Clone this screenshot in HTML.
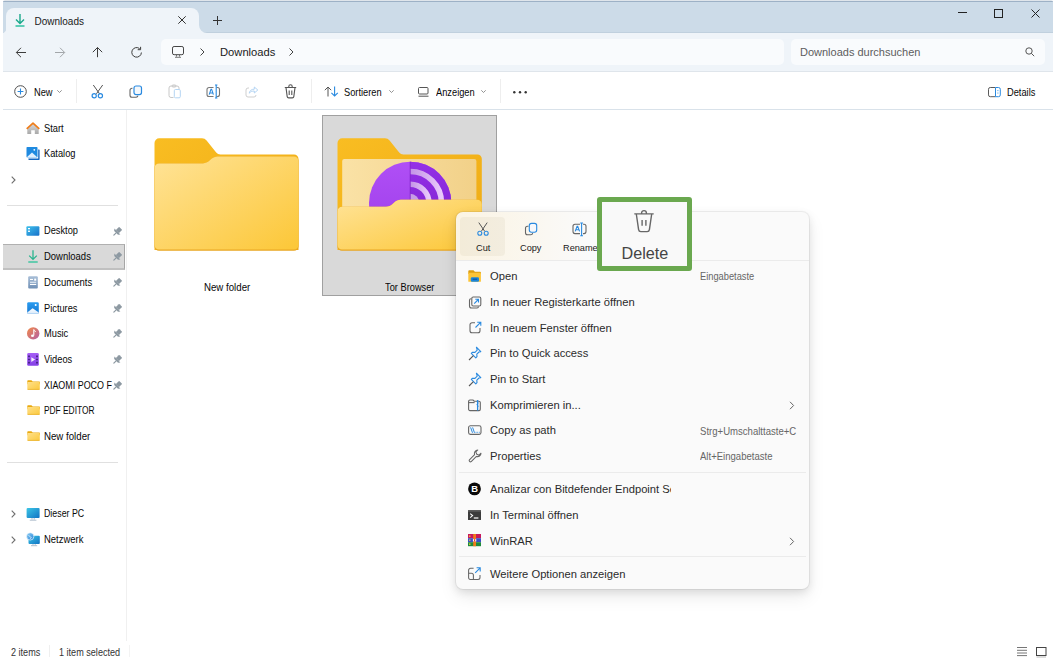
<!DOCTYPE html>
<html><head><meta charset="utf-8">
<style>
*{margin:0;padding:0;box-sizing:border-box}
html,body{width:1056px;height:661px;overflow:hidden;background:#fff;font-family:"Liberation Sans",sans-serif;color:#080808}
.a{position:absolute}
.t{position:absolute;white-space:nowrap;line-height:16px;height:16px}
svg{position:absolute;overflow:visible}
#topline{left:3px;top:0;width:1050px;height:2px;border-radius:4px 4px 0 0;background:linear-gradient(#dfe5eb 0,#dfe5eb 40%,#9db1c6 40%)}
#title{left:3px;top:2px;width:1050px;height:31px;background:#ccdbe8;border-bottom:1px solid #c0d0de}
#tab{left:6px;top:8px;width:193px;height:26px;background:#eff4f9;border-radius:8px 8px 0 0}
#nav{left:3px;top:33px;width:1050px;height:38px;background:#eff4f9}
#navline{left:3px;top:71px;width:1050px;height:1px;background:#dfe5eb}
#addr{left:161px;top:39px;width:623px;height:26px;background:#f9fbfd;border-radius:5px}
#search{left:791px;top:39px;width:254px;height:26px;background:#f9fbfd;border-radius:5px}
#tbline{left:3px;top:109px;width:1050px;height:1px;background:#d9e2ea}
#sidediv{left:126px;top:110px;width:1px;height:531px;background:#f0f0f0}
.side{font-size:9.5px;color:#1a1a1a}
.sel{background:#d9d9d9;border:1px solid #a6a6a6}
.menu{left:456px;top:212px;width:353px;height:377px;background:#fafafa;border-radius:7px;box-shadow:0 0 0 1px rgba(0,0,0,.055),0 3px 8px rgba(0,0,0,.1),0 8px 18px rgba(0,0,0,.08)}
.mi{font-size:11.1px;color:#1a1a1a}
.sc{font-size:9.3px;color:#5f5f5f}
</style></head><body>
<div class="a" id="topline"></div>
<div class="a" id="title"></div>
<div class="a" id="tab"></div>
<div class="a" id="nav"></div>
<svg style="left:199px;top:25px" width="8" height="8" viewBox="0 0 8 8"><path d="M0 0v8h8A8 8 0 0 1 0 0z" fill="#eff4f9"/></svg>
<svg style="left:3px;top:27px" width="3" height="6" viewBox="0 0 3 6"><path d="M3 0v6H0A5 5 0 0 0 3 0z" fill="#eff4f9"/></svg>
<div class="a" id="navline"></div>
<div class="a" id="addr"></div>
<div class="a" id="search"></div>
<div class="a" id="tbline"></div>
<div class="a" id="sidediv"></div>

<!-- tab content -->
<svg style="left:13.5px;top:13px" width="12" height="14" viewBox="0 0 12 14"><path d="M6 1v9M2 6.5l4 4 4-4" stroke="#1aa88b" stroke-width="1.4" fill="none"/><path d="M1.5 13h9" stroke="#2ec1a0" stroke-width="1.5"/></svg>
<div class="t" style="left:34.5px;top:13.5px;font-size:10px;color:#1a1a1a">Downloads</div>
<svg style="left:178px;top:16px" width="8" height="8" viewBox="0 0 8 8"><path d="M.3 .3l7.4 7.4M7.7 .3L.3 7.7" stroke="#333" stroke-width="1"/></svg>
<svg style="left:213px;top:16px" width="9" height="9" viewBox="0 0 9 9"><path d="M4.5 0v9M0 4.5h9" stroke="#333" stroke-width="1"/></svg>

<!-- window controls -->
<svg style="left:958px;top:12px" width="9" height="2"><path d="M0 .5h9" stroke="#222" stroke-width="1"/></svg>
<svg style="left:994px;top:9px" width="9" height="9"><rect x=".5" y=".5" width="8" height="8" fill="none" stroke="#222" stroke-width="1"/></svg>
<svg style="left:1031px;top:9px" width="9" height="9"><path d="M.5 .5l8 8M8.5 .5l-8 8" stroke="#222" stroke-width="1"/></svg>

<!-- nav -->
<svg style="left:15px;top:46px" width="12" height="12" viewBox="0 0 12 12"><path d="M11 6.5H1.5M6 1.8L1.3 6.5 6 11.2" stroke="#3c3c3c" stroke-width="1" fill="none"/></svg>
<svg style="left:54px;top:46px" width="12" height="12" viewBox="0 0 12 12"><path d="M1 6.5h9.5M6 1.8l4.7 4.7L6 11.2" stroke="#a2a6aa" stroke-width="1" fill="none"/></svg>
<svg style="left:92px;top:46px" width="12" height="12" viewBox="0 0 12 12"><path d="M5.5 11.2V1.5M.8 6.2L5.5 1.5l4.7 4.7" stroke="#3c3c3c" stroke-width="1" fill="none"/></svg>
<svg style="left:131px;top:46px" width="12" height="12" viewBox="0 0 12 12"><path d="M10.4 6.5A4.8 4.8 0 1 1 8.6 2.6M9.6.8v2.9H6.7" stroke="#3c3c3c" stroke-width="1" fill="none"/></svg>
<svg style="left:172px;top:46px" width="12" height="12" viewBox="0 0 12 12"><rect x=".5" y=".5" width="11" height="8.2" rx="1.6" fill="none" stroke="#454545"/><path d="M4.5 9v1.6M7.5 9v1.6M3 11.3h6" stroke="#555" stroke-width=".8"/></svg>
<svg style="left:200px;top:48px" width="5" height="8"><path d="M.5 .5L4 4 .5 7.5" stroke="#444" fill="none"/></svg>
<div class="t" style="left:220px;top:44px;font-size:11.2px;color:#1a1a1a">Downloads</div>
<svg style="left:289px;top:48px" width="5" height="8"><path d="M.5 .5L4 4 .5 7.5" stroke="#444" fill="none"/></svg>
<div class="t" style="left:800px;top:44px;font-size:11px;color:#5d5d5d">Downloads durchsuchen</div>
<svg style="left:1025px;top:47px" width="10" height="10"><circle cx="4" cy="4" r="3.2" fill="none" stroke="#555"/><path d="M6.3 6.3L9.2 9.2" stroke="#555"/></svg>

<!-- toolbar -->
<svg style="left:13.5px;top:85px" width="13" height="13" viewBox="0 0 13 13"><circle cx="6.5" cy="6.5" r="5.8" fill="none" stroke="#505050" stroke-width="1"/><path d="M6.5 3.6v5.8M3.6 6.5h5.8" stroke="#2a8ae0" stroke-width="1.1"/></svg>
<div class="t" style="left:33.8px;top:84.76px;font-size:10.2px;transform:scaleX(.91);transform-origin:0 0">New</div>
<svg style="left:57px;top:90px" width="5" height="3"><path d="M.3 .3L2.5 2.5 4.7 .3" stroke="#777" stroke-width=".8" fill="none"/></svg>
<div class="a" style="left:76px;top:79px;width:1px;height:24px;background:#eeeeee"></div>


<!-- toolbar icons -->
<svg style="left:91px;top:84px" width="14" height="15" viewBox="0 0 14 15"><path d="M2.3 1L8.6 9.8M11.7 1L5.4 9.8" stroke="#555" stroke-width="1" fill="none"/><circle cx="3.2" cy="11.7" r="2.1" fill="none" stroke="#2a8ae0" stroke-width="1.2"/><circle cx="9.4" cy="11.7" r="2.1" fill="none" stroke="#2a8ae0" stroke-width="1.2"/></svg>
<svg style="left:129px;top:85px" width="14" height="14" viewBox="0 0 14 14"><path d="M3.5 3.2H3A2 2 0 0 0 1 5.2v5A2 2 0 0 0 3 12.2h4A2 2 0 0 0 9 10.6" stroke="#666" stroke-width="1.1" fill="none"/><rect x="5" y="1" width="7.5" height="8.6" rx="2" fill="#f4f8fc" stroke="#2a8ae0" stroke-width="1.2"/></svg>
<svg style="left:168px;top:84px" width="14" height="15" viewBox="0 0 14 15"><path d="M5.5 13.5H3a2 2 0 0 1-2-2V4a2 2 0 0 1 2-2h6a2 2 0 0 1 2 2v1" stroke="#c8c8c8" fill="none"/><rect x="4" y="1" width="4" height="2" rx="1" fill="none" stroke="#c8c8c8"/><rect x="6.3" y="5.5" width="6" height="8.3" rx="1.2" fill="none" stroke="#b3d4f3"/></svg>
<svg style="left:206px;top:84px" width="15" height="15" viewBox="0 0 15 15"><path d="M7.5 3.5H3a2 2 0 0 0-2 2v5a2 2 0 0 0 2 2h4.5M10.5 3.5H11.5a2 2 0 0 1 2 2v5a2 2 0 0 1-2 2H10.5" stroke="#777" stroke-width="1.1" fill="none"/><path d="M3.2 10.6L5 5.2h.6l1.8 5.4M3.8 9h3" stroke="#2a8ae0" stroke-width="1.1" fill="none"/><path d="M9 1h2.4M10.2 1v13M9 14h2.4" stroke="#2a8ae0" stroke-width="1.1" fill="none"/></svg>
<svg style="left:245px;top:85px" width="14" height="13" viewBox="0 0 14 13"><path d="M4 3H3a2 2 0 0 0-2 2v5a2 2 0 0 0 2 2h6a2 2 0 0 0 2-2" stroke="#cfcfcf" fill="none"/><path d="M4.2 8.2C4.6 5.6 6.6 4.2 9.3 4.2V2l3.5 3-3.5 3V6c-2 0-3.8.6-5.1 2.2z" fill="none" stroke="#b3d4f3" stroke-width="1"/></svg>
<svg style="left:284px;top:84px" width="13" height="15" viewBox="0 0 13 15"><path d="M.8 3.5h11.4M4.8 3.3V2.4a1.6 1.6 0 0 1 3.4 0v.9M2 3.6l1.2 9a1.5 1.5 0 0 0 1.5 1.3h3.6a1.5 1.5 0 0 0 1.5-1.3l1.2-9M5.2 6.5v4.5M7.8 6.5v4.5" stroke="#555" stroke-width="1.1" fill="none"/></svg>
<div class="a" style="left:311px;top:79px;width:1px;height:24px;background:#eeeeee"></div>
<svg style="left:324px;top:86px" width="15" height="11" viewBox="0 0 15 11"><path d="M4 10.5V1M.8 4.2L4 1l3.2 3.2" stroke="#555" stroke-width="1" fill="none"/><path d="M10.6 .5V10M7.4 6.8l3.2 3.2 3.2-3.2" stroke="#2a8ae0" stroke-width="1.1" fill="none"/></svg>
<div class="t" style="left:344px;top:84.76px;font-size:10.2px;transform:scaleX(.91);transform-origin:0 0">Sortieren</div>
<svg style="left:389px;top:90px" width="5" height="3"><path d="M.3 .3L2.5 2.5 4.7 .3" stroke="#777" stroke-width=".8" fill="none"/></svg>
<svg style="left:418px;top:87px" width="11" height="10" viewBox="0 0 11 10"><rect x=".5" y=".5" width="9.5" height="6.5" rx="1" fill="none" stroke="#555"/><path d="M.5 9.2h10" stroke="#555"/></svg>
<div class="t" style="left:436px;top:84.76px;font-size:10.2px;transform:scaleX(.91);transform-origin:0 0">Anzeigen</div>
<svg style="left:481px;top:90px" width="5" height="3"><path d="M.3 .3L2.5 2.5 4.7 .3" stroke="#777" stroke-width=".8" fill="none"/></svg>
<div class="a" style="left:500px;top:79px;width:1px;height:24px;background:#eeeeee"></div>
<svg style="left:513px;top:91px" width="14" height="3"><circle cx="1.3" cy="1.3" r="1.2" fill="#333"/><circle cx="7" cy="1.3" r="1.2" fill="#333"/><circle cx="12.7" cy="1.3" r="1.2" fill="#333"/></svg>
<svg style="left:988px;top:87px" width="14" height="11" viewBox="0 0 14 11"><path d="M7.5 .5H2.3A1.8 1.8 0 0 0 .5 2.3v5.6a1.8 1.8 0 0 0 1.8 1.8h5.2" fill="none" stroke="#5a5a5a"/><path d="M7.5 .5h3A1.8 1.8 0 0 1 12.3 2.3v5.6a1.8 1.8 0 0 1-1.8 1.8h-3z" fill="#fff" stroke="#2a8ae0"/><path d="M9.9 3.2v.9M9.9 5.6v.9" stroke="#2a8ae0" stroke-width="1"/></svg>
<div class="t" style="left:1007px;top:84.76px;font-size:10.2px;transform:scaleX(.91);transform-origin:0 0">Details</div>
<!-- sidebar -->
<div class="a" style="left:3px;top:244px;width:122px;height:26px;background:#d9d9d9;border-top:1px solid #b0b0b0;border-bottom:2px solid #c0c0c0;border-right:1px solid #a6a6a6"></div>
<div class="a" style="left:7px;top:205px;width:111px;height:1px;background:#e0e0e0"></div>
<div class="a" style="left:7px;top:462px;width:111px;height:1px;background:#e0e0e0"></div>
<div class="t" style="left:43.5px;top:120.67px;font-size:10.2px;transform:scaleX(.91);transform-origin:0 0">Start</div>
<div class="t" style="left:43.5px;top:146.37px;font-size:10.2px;transform:scaleX(.91);transform-origin:0 0">Katalog</div>
<div class="t" style="left:43.5px;top:223.47px;font-size:10.2px;transform:scaleX(.91);transform-origin:0 0">Desktop</div>
<div class="t" style="left:43.5px;top:249.17px;font-size:10.2px;transform:scaleX(.93);transform-origin:0 0">Downloads</div>
<div class="t" style="left:43.5px;top:274.87px;font-size:10.2px;transform:scaleX(.935);transform-origin:0 0">Documents</div>
<div class="t" style="left:43.5px;top:300.57px;font-size:10.2px;transform:scaleX(.91);transform-origin:0 0">Pictures</div>
<div class="t" style="left:43.5px;top:326.27px;font-size:10.2px;transform:scaleX(.91);transform-origin:0 0">Music</div>
<div class="t" style="left:43.5px;top:351.97px;font-size:10.2px;transform:scaleX(.91);transform-origin:0 0">Videos</div>
<div class="t" style="left:43.5px;top:377.67px;font-size:10.2px;transform:scaleX(.875);transform-origin:0 0;width:78px;overflow:hidden">XIAOMI POCO F</div>
<div class="t" style="left:43.5px;top:403.37px;font-size:10.2px;transform:scaleX(0.82);transform-origin:0 0">PDF EDITOR</div>
<div class="t" style="left:43.5px;top:429.07px;font-size:10.2px;transform:scaleX(.95);transform-origin:0 0">New folder</div>
<div class="t" style="left:43.5px;top:506.17px;font-size:10.2px;transform:scaleX(0.865);transform-origin:0 0">Dieser PC</div>
<div class="t" style="left:43.5px;top:531.87px;font-size:10.2px;transform:scaleX(.93);transform-origin:0 0">Netzwerk</div>
<svg style="left:111px;top:225.5px" width="12" height="12" viewBox="0 0 12 12"><g transform="rotate(45 6 6)" fill="#8d99a2"><rect x="3.8" y=".8" width="4.4" height="4.8" rx=".6"/><path d="M1.8 5.4h8.4l-1.5 1.9H3.3z"/><rect x="5.4" y="7" width="1.2" height="4" rx=".5"/></g></svg>
<svg style="left:111px;top:251.2px" width="12" height="12" viewBox="0 0 12 12"><g transform="rotate(45 6 6)" fill="#8d99a2"><rect x="3.8" y=".8" width="4.4" height="4.8" rx=".6"/><path d="M1.8 5.4h8.4l-1.5 1.9H3.3z"/><rect x="5.4" y="7" width="1.2" height="4" rx=".5"/></g></svg>
<svg style="left:111px;top:276.9px" width="12" height="12" viewBox="0 0 12 12"><g transform="rotate(45 6 6)" fill="#8d99a2"><rect x="3.8" y=".8" width="4.4" height="4.8" rx=".6"/><path d="M1.8 5.4h8.4l-1.5 1.9H3.3z"/><rect x="5.4" y="7" width="1.2" height="4" rx=".5"/></g></svg>
<svg style="left:111px;top:302.6px" width="12" height="12" viewBox="0 0 12 12"><g transform="rotate(45 6 6)" fill="#8d99a2"><rect x="3.8" y=".8" width="4.4" height="4.8" rx=".6"/><path d="M1.8 5.4h8.4l-1.5 1.9H3.3z"/><rect x="5.4" y="7" width="1.2" height="4" rx=".5"/></g></svg>
<svg style="left:111px;top:328.3px" width="12" height="12" viewBox="0 0 12 12"><g transform="rotate(45 6 6)" fill="#8d99a2"><rect x="3.8" y=".8" width="4.4" height="4.8" rx=".6"/><path d="M1.8 5.4h8.4l-1.5 1.9H3.3z"/><rect x="5.4" y="7" width="1.2" height="4" rx=".5"/></g></svg>
<svg style="left:111px;top:354.0px" width="12" height="12" viewBox="0 0 12 12"><g transform="rotate(45 6 6)" fill="#8d99a2"><rect x="3.8" y=".8" width="4.4" height="4.8" rx=".6"/><path d="M1.8 5.4h8.4l-1.5 1.9H3.3z"/><rect x="5.4" y="7" width="1.2" height="4" rx=".5"/></g></svg>
<svg style="left:111px;top:379.7px" width="12" height="12" viewBox="0 0 12 12"><g transform="rotate(45 6 6)" fill="#8d99a2"><rect x="3.8" y=".8" width="4.4" height="4.8" rx=".6"/><path d="M1.8 5.4h8.4l-1.5 1.9H3.3z"/><rect x="5.4" y="7" width="1.2" height="4" rx=".5"/></g></svg>
<svg style="left:10.5px;top:176.2px" width="6" height="8"><path d="M.7 .7L4 4 .7 7.3" stroke="#6e6e6e" stroke-width="1.1" fill="none"/></svg>
<svg style="left:10.5px;top:510.3px" width="6" height="8"><path d="M.7 .7L4 4 .7 7.3" stroke="#6e6e6e" stroke-width="1.1" fill="none"/></svg>
<svg style="left:10.5px;top:536.0px" width="6" height="8"><path d="M.7 .7L4 4 .7 7.3" stroke="#6e6e6e" stroke-width="1.1" fill="none"/></svg>

<!-- sidebar icons -->
<svg style="left:26px;top:122px" width="14" height="12" viewBox="0 0 14 12"><defs><linearGradient id="hg" x1="0" y1="0" x2="0" y2="1"><stop offset="0" stop-color="#d9d9d9"/><stop offset="1" stop-color="#a9a9a9"/></linearGradient></defs><path d="M1.3 6.2L7 1.5l5.7 4.7V12H8.8V8.2H5.2V12H1.3z" fill="url(#hg)"/><path d="M.7 6.8L7 1.2l6.3 5.6" stroke="#ef7d1a" stroke-width="1.7" fill="none" stroke-linejoin="round"/></svg>
<svg style="left:26px;top:147px" width="14" height="13" viewBox="0 0 14 13"><path d="M12.2 2.5h.8a.6.6 0 0 1 .6.6v9.2a.6.6 0 0 1-.6.6H3a.6.6 0 0 1-.6-.6v-.8h9.8z" fill="#1467c2"/><rect x=".5" y="0" width="11" height="10.5" rx=".8" fill="#1f8ae0"/><path d="M.5 10.5L6 5.6l5.5 4.9z" fill="#e0efff"/><circle cx="8.3" cy="2.8" r=".9" fill="#fff"/></svg>
<svg style="left:26px;top:226px" width="14" height="10" viewBox="0 0 14 10"><defs><linearGradient id="dg" x1="0" y1="0" x2="1" y2="1"><stop offset="0" stop-color="#3fc1ec"/><stop offset="1" stop-color="#1670c9"/></linearGradient></defs><rect x=".4" y=".2" width="13" height="9.6" rx="1" fill="url(#dg)"/><rect x="2" y="2" width="2" height="1.3" fill="#fff"/><rect x="2" y="4.6" width="2" height="1.3" fill="#fff"/></svg>
<svg style="left:28px;top:250px" width="10" height="13" viewBox="0 0 10 13"><path d="M5 .3v9M1.2 5.6L5 9.4l3.8-3.8" stroke="#28b48e" stroke-width="1.3" fill="none"/><path d="M.3 12h9.4" stroke="#33c49c" stroke-width="1.4"/></svg>
<svg style="left:28px;top:276px" width="10" height="13" viewBox="0 0 10 13"><defs><linearGradient id="docg" x1="0" y1="0" x2="0" y2="1"><stop offset="0" stop-color="#a9bfd8"/><stop offset="1" stop-color="#6f8fb5"/></linearGradient></defs><rect x=".2" y=".2" width="9.6" height="12.4" rx="1" fill="url(#docg)"/><rect x="2" y="2.9" width="3" height="1.1" fill="#fff"/><rect x="6.2" y="2.6" width="2" height="2.1" fill="#fff"/><rect x="2" y="5.7" width="6.2" height="1.1" fill="#e6eef7"/><rect x="2" y="7.9" width="6.2" height="1.1" fill="#fff"/></svg>
<svg style="left:27px;top:302px" width="12" height="12" viewBox="0 0 12 12"><defs><linearGradient id="pg" x1="0" y1="0" x2="0" y2="1"><stop offset="0" stop-color="#2a9cf0"/><stop offset="1" stop-color="#1677d2"/></linearGradient><linearGradient id="pm" x1="0" y1="0" x2="0" y2="1"><stop offset="0" stop-color="#ffffff"/><stop offset="1" stop-color="#d6e9fb"/></linearGradient></defs><rect x=".2" y=".2" width="11.6" height="11.6" rx="1.4" fill="url(#pg)"/><path d="M.2 10.4L5.6 6.2l6.2 4.2v.2a1.2 1.2 0 0 1-1.2 1.2H1.4A1.2 1.2 0 0 1 .2 10.6z" fill="url(#pm)"/><circle cx="8.7" cy="3" r="1" fill="#fff"/></svg>
<svg style="left:27px;top:327px" width="13" height="13" viewBox="0 0 13 13"><defs><linearGradient id="mg" x1="0" y1="0" x2="1" y2="1"><stop offset="0" stop-color="#f28a48"/><stop offset="1" stop-color="#b35fa6"/></linearGradient></defs><circle cx="6.2" cy="6.4" r="6.2" fill="url(#mg)"/><path d="M6.8 2.6v6" stroke="#fff" stroke-width="1.1"/><path d="M6.8 2.6c.4 1 1.6 1.4 1.9 2.4" stroke="#fff" stroke-width=".9" fill="none"/><ellipse cx="5.5" cy="8.7" rx="1.5" ry="1.2" fill="#fff"/></svg>
<svg style="left:27px;top:353px" width="12" height="13" viewBox="0 0 12 13"><defs><linearGradient id="vg" x1="0" y1="0" x2="0" y2="1"><stop offset="0" stop-color="#a65ff6"/><stop offset="1" stop-color="#8440e6"/></linearGradient></defs><rect x=".2" y=".1" width="11.6" height="12.6" rx="1.3" fill="url(#vg)"/><path d="M2 2.6v1.6M2 5.7v1.6M2 8.8v1.6M10 2.6v1.6M10 5.7v1.6M10 8.8v1.6" stroke="#3f1f7a" stroke-width="1.7"/><path d="M4.3 4.3v4.6l3.8-2.3z" fill="#f2eefc"/></svg>
<svg width="0" height="0" style="left:0;top:0"><defs><linearGradient id="fg" x1="0" y1="0" x2="1" y2="1"><stop offset="0" stop-color="#ffe08a"/><stop offset="1" stop-color="#fbc93e"/></linearGradient></defs></svg>
<svg style="left:27px;top:380px" width="13" height="10" viewBox="0 0 13 10"><path d="M.3 1A.8.8 0 0 1 1.1.2h3.3l1.3 1.2h6.5a.8.8 0 0 1 .8.8v2H.3z" fill="#e9a90f"/><rect x=".3" y="2" width="12.5" height="7.8" rx=".7" fill="url(#fg)"/><path d="M.6 9.4h11.9" stroke="#eab12a" stroke-width=".8"/></svg>
<svg style="left:27px;top:405px" width="13" height="10" viewBox="0 0 13 10"><path d="M.3 1A.8.8 0 0 1 1.1.2h3.3l1.3 1.2h6.5a.8.8 0 0 1 .8.8v2H.3z" fill="#e9a90f"/><rect x=".3" y="2" width="12.5" height="7.8" rx=".7" fill="url(#fg)"/><path d="M.6 9.4h11.9" stroke="#eab12a" stroke-width=".8"/></svg>
<svg style="left:27px;top:431px" width="13" height="10" viewBox="0 0 13 10"><path d="M.3 1A.8.8 0 0 1 1.1.2h3.3l1.3 1.2h6.5a.8.8 0 0 1 .8.8v2H.3z" fill="#e9a90f"/><rect x=".3" y="2" width="12.5" height="7.8" rx=".7" fill="url(#fg)"/><path d="M.6 9.4h11.9" stroke="#eab12a" stroke-width=".8"/></svg>

<svg style="left:26px;top:508px" width="14" height="13" viewBox="0 0 14 13"><defs><linearGradient id="pcg" x1="0" y1="0" x2="1" y2="1"><stop offset="0" stop-color="#3cc6e6"/><stop offset="1" stop-color="#1273c4"/></linearGradient></defs><rect x=".6" y=".1" width="13" height="9.9" rx="1" fill="url(#pcg)"/><path d="M6 10v1.6M8.2 10v1.6M3.8 12.2h6.6" stroke="#a8b8c8" stroke-width=".9"/></svg>
<svg style="left:26px;top:532px" width="14" height="14" viewBox="0 0 14 14"><defs><linearGradient id="ng" x1="0" y1="0" x2="1" y2="1"><stop offset="0" stop-color="#8ccdf4"/><stop offset="1" stop-color="#2a86d8"/></linearGradient></defs><rect x="2.5" y="3.8" width="11.3" height="8.2" rx="1" fill="url(#pcg)"/><path d="M7 12v1.4M9.2 12v1.4M5 13.7h6.2" stroke="#a8b8c8" stroke-width=".9"/><circle cx="4.2" cy="4.4" r="3.7" fill="url(#ng)" stroke="#fff" stroke-width=".6"/><path d="M2.5 3.5c1 .3 1.3 1.2 2.2 1.5M4 6.8c.5-.6 1.2-.8 1.5-1.6" stroke="#e8f6ff" stroke-width=".8" fill="none"/></svg>

<!-- files -->
<div class="a sel" style="left:322px;top:115px;width:175px;height:181px;border-color:#a0a0a0"></div>
<svg style="left:140px;top:130px" width="360" height="130" viewBox="140 130 360 130">
<defs>
<linearGradient id="ffront" x1="0" y1="0" x2="1" y2="1"><stop offset="0" stop-color="#ffe397"/><stop offset="1" stop-color="#fcc737"/></linearGradient>
<linearGradient id="fback" x1="0" y1="0" x2="1" y2="1"><stop offset="0" stop-color="#f9bd22"/><stop offset="1" stop-color="#eeaa14"/></linearGradient>
<linearGradient id="paper" x1="0" y1="0" x2="1" y2="0"><stop offset="0" stop-color="#fae2a6"/><stop offset="1" stop-color="#f2d189"/></linearGradient>
<linearGradient id="torl" x1="0" y1="0" x2="0" y2="1"><stop offset="0" stop-color="#b04ff6"/><stop offset="1" stop-color="#9c3de8"/></linearGradient>
<linearGradient id="torr" x1="0" y1="0" x2="0" y2="1"><stop offset="0" stop-color="#9430e6"/><stop offset="1" stop-color="#7a1fcc"/></linearGradient><linearGradient id="ring" x1="0" y1="0" x2="1" y2="0"><stop offset="0" stop-color="#c393e6"/><stop offset="1" stop-color="#e9c9fb"/></linearGradient><clipPath id="torclip"><rect x="340" y="150" width="145" height="60"/></clipPath>
</defs>
<!-- New folder -->
<path d="M154.5 250V143a4.7 4.7 0 0 1 4.7-4.7H202a6 6 0 0 1 4.6 2.2l9.6 12a5.4 5.4 0 0 0 4.2 2H294a4.5 4.5 0 0 1 4.5 4.5V250z" fill="url(#fback)"/>
<path d="M154.5 168a4.6 4.6 0 0 1 4.6-4.6H203c2.6 0 4.6-1 6.6-2.8l1.6-1.5c2-1.8 4-2.7 6.6-2.7H294a4.5 4.5 0 0 1 4.5 4.5V246.3a4.5 4.5 0 0 1-4.5 4.5H159a4.5 4.5 0 0 1-4.5-4.5z" fill="#e9a622"/>
<path d="M154.5 168a4.6 4.6 0 0 1 4.6-4.6H203c2.6 0 4.6-1 6.6-2.8l1.6-1.5c2-1.8 4-2.7 6.6-2.7H294a4.5 4.5 0 0 1 4.5 4.5V245a4.5 4.5 0 0 1-4.5 4.5H159a4.5 4.5 0 0 1-4.5-4.5z" fill="url(#ffront)"/>
<!-- Tor folder -->
<path d="M337.5 250V143a4.7 4.7 0 0 1 4.7-4.7H385a6 6 0 0 1 4.6 2.2l9.6 12a5.4 5.4 0 0 0 4.2 2H477.5a4.3 4.3 0 0 1 4.3 4.3V250z" fill="url(#fback)"/>
<rect x="342.2" y="158.9" width="134.2" height="70" rx="2.2" fill="url(#paper)"/>
<g clip-path="url(#torclip)">
<circle cx="410.2" cy="202.9" r="41.2" fill="url(#torl)"/>
<path d="M410.2 161.7a41.2 41.2 0 0 1 0 82.4z" fill="url(#torr)"/>
<path d="M410.2 171.6a31.3 31.3 0 0 1 0 62.6" stroke="url(#ring)" stroke-width="5.5" fill="none"/>
<path d="M410.2 184.2a18.7 18.7 0 0 1 0 37.4" stroke="url(#ring)" stroke-width="5.5" fill="none"/>
<path d="M410.2 193.7a9.2 9.2 0 0 1 0 18.4z" fill="#c79be6"/>
<path d="M410.2 161.7v82" stroke="#7d22c8" stroke-width=".8"/>
</g>
<path d="M337.5 211.3a4.6 4.6 0 0 1 4.6-4.6H386c2.6 0 4.6-1 6.6-2.8l1.6-1.5c2-1.8 4-2.7 6.6-2.7H477.3a4.5 4.5 0 0 1 4.5 4.5V246.3a4.5 4.5 0 0 1-4.5 4.5H342a4.5 4.5 0 0 1-4.5-4.5z" fill="#e9a622"/>
<path d="M337.5 211.3a4.6 4.6 0 0 1 4.6-4.6H386c2.6 0 4.6-1 6.6-2.8l1.6-1.5c2-1.8 4-2.7 6.6-2.7H477.3a4.5 4.5 0 0 1 4.5 4.5V245a4.5 4.5 0 0 1-4.5 4.5H342a4.5 4.5 0 0 1-4.5-4.5z" fill="url(#ffront)"/>
</svg>
<div class="t" style="left:204px;top:280.47px;font-size:10.2px;transform:scaleX(.95);transform-origin:0 0">New folder</div>
<div class="t" style="left:385px;top:280.47px;font-size:10.2px;transform:scaleX(.91);transform-origin:0 0">Tor Browser</div>

<!-- context menu -->
<div class="a menu"></div>
<div class="a" style="left:456px;top:212px;width:353px;height:48px;border-radius:8px 8px 0 0;background:linear-gradient(to right,rgba(255,220,140,.2) 0,rgba(255,220,140,.12) 60px,rgba(255,220,140,0) 130px)"></div>
<div class="a" style="left:456px;top:260px;width:353px;height:1px;background:#ebebeb"></div>
<div class="a" style="left:459px;top:472px;width:347px;height:1px;background:#ebebeb"></div>
<div class="a" style="left:459px;top:556px;width:347px;height:1px;background:#ebebeb"></div>
<div class="a" style="left:460px;top:217px;width:45px;height:39px;border-radius:4px;background:rgba(120,100,40,.06)"></div>
<svg style="left:477px;top:222px" width="12" height="14" viewBox="0 0 12 14"><path d="M1.8.6L7.6 9.2M10.2.6L4.4 9.2" stroke="#555" stroke-width="1" fill="none"/><circle cx="2.8" cy="11.3" r="2" fill="none" stroke="#2a8ae0" stroke-width="1.1"/><circle cx="9.2" cy="11.3" r="2" fill="none" stroke="#2a8ae0" stroke-width="1.1"/></svg>
<svg style="left:524px;top:222px" width="14" height="14" viewBox="0 0 14 14"><path d="M4.5 4.2H3.5A2 2 0 0 0 1.5 6.2v4.5a2 2 0 0 0 2 2h3.2a2 2 0 0 0 2-1.7" stroke="#666" stroke-width="1.1" fill="none"/><rect x="5.3" y="1.4" width="7.4" height="8.8" rx="2.2" fill="#f6f8fb" stroke="#2a8ae0" stroke-width="1.1"/></svg>
<svg style="left:572px;top:222px" width="15" height="15" viewBox="0 0 15 15"><path d="M8 2.3H3A2 2 0 0 0 1 4.3v5.3a2 2 0 0 0 2 2h5M11 2.3h1a2 2 0 0 1 2 2v5.3a2 2 0 0 1-2 2h-1" stroke="#666" stroke-width="1.1" fill="none"/><path d="M3.2 9.4L5.1 4.2h.6l1.9 5.2M3.8 7.8h3.2" stroke="#2a8ae0" stroke-width="1.1" fill="none"/><path d="M8.2 1h2.8M9.6 1v12.8M8.2 13.8h2.8" stroke="#2a8ae0" stroke-width="1.1" fill="none"/></svg>
<div class="t" style="left:476px;top:239.61px;font-size:9.2px;color:#1a1a1a">Cut</div>
<div class="t" style="left:520px;top:239.61px;font-size:9.2px;color:#1a1a1a">Copy</div>
<div class="t" style="left:563px;top:239.61px;font-size:9.2px;color:#1a1a1a">Rename</div>
<div class="t" style="left:490px;top:268.12px;font-size:11.2px;color:#2b2b2b">Open</div>
<div class="t" style="left:700px;top:269.24px;font-size:9.99px;transform:scaleX(0.93);transform-origin:0 0;color:#666">Eingabetaste</div>
<div class="t" style="left:490px;top:293.82px;font-size:11.2px;color:#2b2b2b">In neuer Registerkarte öffnen</div>
<div class="t" style="left:490px;top:319.52px;font-size:11.2px;color:#2b2b2b">In neuem Fenster öffnen</div>
<div class="t" style="left:490px;top:345.42px;font-size:11.2px;color:#2b2b2b">Pin to Quick access</div>
<div class="t" style="left:490px;top:371.02px;font-size:11.2px;color:#2b2b2b">Pin to Start</div>
<div class="t" style="left:490px;top:396.72px;font-size:11.2px;color:#2b2b2b">Komprimieren in...</div>
<svg style="left:789px;top:400.6px" width="6" height="9"><path d="M1 .8L4.6 4.5 1 8.2" stroke="#666" stroke-width="1" fill="none"/></svg>
<div class="t" style="left:490px;top:422.42px;font-size:11.2px;color:#2b2b2b">Copy as path</div>
<div class="t" style="left:700px;top:423.54px;font-size:9.99px;transform:scaleX(0.958);transform-origin:0 0;color:#666">Strg+Umschalttaste+C</div>
<div class="t" style="left:490px;top:448.12px;font-size:11.2px;color:#2b2b2b">Properties</div>
<div class="t" style="left:700px;top:449.24px;font-size:9.99px;transform:scaleX(0.956);transform-origin:0 0;color:#666">Alt+Eingabetaste</div>
<div class="t" style="left:490px;top:481.22px;font-size:11.2px;color:#2b2b2b;width:181px;overflow:hidden">Analizar con Bitdefender Endpoint Se</div>
<div class="t" style="left:490px;top:507.02px;font-size:11.2px;color:#2b2b2b">In Terminal öffnen</div>
<div class="t" style="left:490px;top:532.72px;font-size:11.2px;color:#2b2b2b">WinRAR</div>
<svg style="left:789px;top:536.6px" width="6" height="9"><path d="M1 .8L4.6 4.5 1 8.2" stroke="#666" stroke-width="1" fill="none"/></svg>
<div class="t" style="left:490px;top:566.12px;font-size:11.2px;color:#2b2b2b">Weitere Optionen anzeigen</div>

<!-- menu icons -->
<svg style="left:468px;top:270px" width="14" height="12" viewBox="0 0 14 12"><path d="M.3 1.2A1 1 0 0 1 1.3.2h4.2l1.4 1.6h5.2a.8.8 0 0 1 .8.8V4H.3z" fill="#dc9e12"/><path d="M.3 2.8h12.6v8.4a.6.6 0 0 1-.6.6H.9a.6.6 0 0 1-.6-.6z" fill="#fcc436"/><rect x="2.8" y="7.2" width="8.2" height="4.6" rx="1.2" fill="#1a86dc"/><path d="M4.6 9.2h4.6" stroke="#0c4a8c" stroke-width=".9"/></svg>
<svg style="left:468.8px;top:295.5px" width="13" height="13" viewBox="0 0 13 13"><path d="M2.3 2.8H2a1.5 1.5 0 0 0-1.5 1.5V10a2 2 0 0 0 2 2H8a1.5 1.5 0 0 0 1.5-1.5" stroke="#666" stroke-width="1.1" fill="none"/><rect x="2.8" y="1" width="9" height="9" rx="1.4" fill="#fafafa" stroke="#666" stroke-width="1.1"/><path d="M5.2 7.7L9.3 3.5M6.3 3.3h3.2v3.2" stroke="#2a8ae0" stroke-width="1.1" fill="none"/></svg>
<svg style="left:468.8px;top:321px" width="13" height="13" viewBox="0 0 13 13"><path d="M6 1.8H3A2 2 0 0 0 1 3.8v6A2 2 0 0 0 3 11.8h6a2 2 0 0 0 2-2V7" stroke="#666" stroke-width="1.1" fill="none"/><path d="M6.5 6.5L11.6 1.4M8.2 1.2h3.6v3.6" stroke="#2a8ae0" stroke-width="1.1" fill="none"/></svg>
<svg style="left:468px;top:346px" width="14" height="14" viewBox="0 0 14 14"><path d="M8.4 1.2l4.4 4.4-1.8.4-2.2 2.2.2 2.5-1.2 1.2L3.3 7.4l1.2-1.2 2.5.2 2.2-2.2z" fill="none" stroke="#2a8ae0" stroke-width="1.1" stroke-linejoin="round"/><path d="M5.4 9.6L1 14" stroke="#555" stroke-width="1.1"/></svg>
<svg style="left:468px;top:372px" width="14" height="14" viewBox="0 0 14 14"><path d="M8.4 1.2l4.4 4.4-1.8.4-2.2 2.2.2 2.5-1.2 1.2L3.3 7.4l1.2-1.2 2.5.2 2.2-2.2z" fill="none" stroke="#2a8ae0" stroke-width="1.1" stroke-linejoin="round"/><path d="M5.4 9.6L1 14" stroke="#555" stroke-width="1.1"/></svg>
<svg style="left:468px;top:399px" width="14" height="12" viewBox="0 0 14 12"><path d="M12.3 10.2V3.6a1.4 1.4 0 0 0-1.4-1.4H6.2L5 1H2A1.5 1.5 0 0 0 .6 2.4v7.8A1.4 1.4 0 0 0 2 11.6h9a1.4 1.4 0 0 0 1.3-1.4z" fill="none" stroke="#666" stroke-width="1.1"/><path d="M.6 3.6h6" stroke="#666" stroke-width="1.1"/><path d="M9.6 1v10.6" stroke="#2a8ae0" stroke-width="1.3"/><path d="M8.6 2.4h1M9.6 4h1M8.6 5.6h1M9.6 7.2h1" stroke="#2a8ae0" stroke-width="1"/></svg>
<svg style="left:468px;top:425px" width="14" height="11" viewBox="0 0 14 11"><rect x=".6" y=".8" width="12.4" height="8.6" rx="1.8" fill="none" stroke="#666" stroke-width="1.1"/><path d="M2.6 2.4l1.9 5.4M4.6 2.4l1.9 5.4" stroke="#2a8ae0" stroke-width="1"/><path d="M7.6 7.3h.9M9.3 7.3h.9M11 7.3h.7" stroke="#2a8ae0" stroke-width="1"/></svg>
<svg style="left:468px;top:449px" width="14" height="14" viewBox="0 0 14 14"><path d="M9.8 1a3.4 3.4 0 0 0-3.2 4.6L1.4 10.8a1.3 1.3 0 0 0 1.8 1.8l5.2-5.2A3.4 3.4 0 0 0 13 4.2L11 6.2 8.8 5.2 7.8 3l2-2z" fill="none" stroke="#666" stroke-width="1.05" stroke-linejoin="round"/></svg>
<svg style="left:468px;top:482px" width="14" height="14" viewBox="0 0 14 14"><circle cx="6.5" cy="6.9" r="6.4" fill="#0a0a0a"/><text x="6.6" y="10.3" font-family="Liberation Sans" font-weight="bold" font-size="9.4" fill="#fff" text-anchor="middle">B</text></svg>
<svg style="left:468px;top:510px" width="14" height="11" viewBox="0 0 14 11"><rect x="0" y=".2" width="13" height="9.8" rx=".6" fill="#3c3c3c"/><rect x="0" y=".2" width="13" height="1.6" fill="#5a5a5a"/><path d="M2.2 3.6L4.6 5.6 2.2 7.6" stroke="#fff" stroke-width="1.1" fill="none"/><path d="M5.8 8h4.6" stroke="#fff" stroke-width="1.2"/></svg>
<svg style="left:468px;top:534px" width="14" height="13" viewBox="0 0 14 13"><rect x="0" y="0" width="13" height="4.2" fill="#c8195c"/><rect x="0" y="4.2" width="13" height="4" fill="#3a4ec4"/><rect x="0" y="8.2" width="13" height="4" fill="#1e8b3c"/><rect x="5.2" y="0" width="2.8" height="12.2" fill="#ef7a1a"/><rect x="1.2" y="1.4" width="1.2" height="1.6" fill="#f2d23c"/><rect x="1.2" y="5.4" width="1.2" height="1.6" fill="#f2d23c"/><rect x="1.2" y="9.4" width="1.2" height="1.6" fill="#f2d23c"/><rect x="4.9" y="5.2" width="3.4" height="2.2" fill="#fff"/><rect x="6" y="5.2" width="1.2" height="2.2" fill="#d33"/></svg>
<svg style="left:468px;top:567px" width="14" height="13" viewBox="0 0 14 13"><path d="M5.6 1.2H2.6a2 2 0 0 0-2 2v7.6a1.6 1.6 0 0 0 1.6 1.6H10a2 2 0 0 0 2-2V8" stroke="#666" stroke-width="1.05" fill="none"/><path d="M.6 6.2h2.8a2 2 0 0 1 2 2v4.2" stroke="#666" stroke-width="1.05" fill="none"/><path d="M7.2 5.8l5-5M8.6.8h3.6v3.6" stroke="#2a8ae0" stroke-width="1.1" fill="none"/></svg>

<!-- green highlight box -->
<div class="a" style="left:597px;top:197px;width:95px;height:74px;border:5px solid #6aa84f;border-radius:3px;background:#f9f9f9"></div>
<svg style="left:633px;top:209px" width="22" height="24" viewBox="0 0 22 24"><path d="M1.3 4.9h19.4M8.6 4.7V4a2.4 2.4 0 0 1 4.8 0v.7M3.3 5l2.3 15.6a2.3 2.3 0 0 0 2.3 2h6.2a2.3 2.3 0 0 0 2.3-2L18.7 5M9.1 11v5.8M12.9 11v5.8" stroke="#676767" stroke-width="1.4" fill="none"/></svg>
<div class="t" style="left:621.5px;top:244.59px;font-size:16.2px;color:#454545">Delete</div>
<div class="t" style="left:10.5px;top:644.54px;font-size:9.99px;transform:scaleX(.91);transform-origin:0 0;color:#333">2 items</div>
<div class="a" style="left:49px;top:645px;width:1px;height:12px;background:#efefef"></div>
<div class="t" style="left:58.5px;top:644.54px;font-size:9.99px;transform:scaleX(.91);transform-origin:0 0;color:#333">1 item selected</div>
<div class="a" style="left:129px;top:645px;width:1px;height:12px;background:#f3f3f3"></div>
<svg style="left:1017px;top:647px" width="10" height="9"><path d="M0 .5h10M0 3.3h10M0 6h10M0 8.6h10" stroke="#666" stroke-width=".9"/></svg>
<svg style="left:1036px;top:647px" width="11" height="11"><rect x=".5" y=".5" width="9.5" height="8" fill="none" stroke="#444" stroke-width="1"/><path d="M.5 10h9.5" stroke="#bbb" stroke-width="1"/></svg>
</body></html>
